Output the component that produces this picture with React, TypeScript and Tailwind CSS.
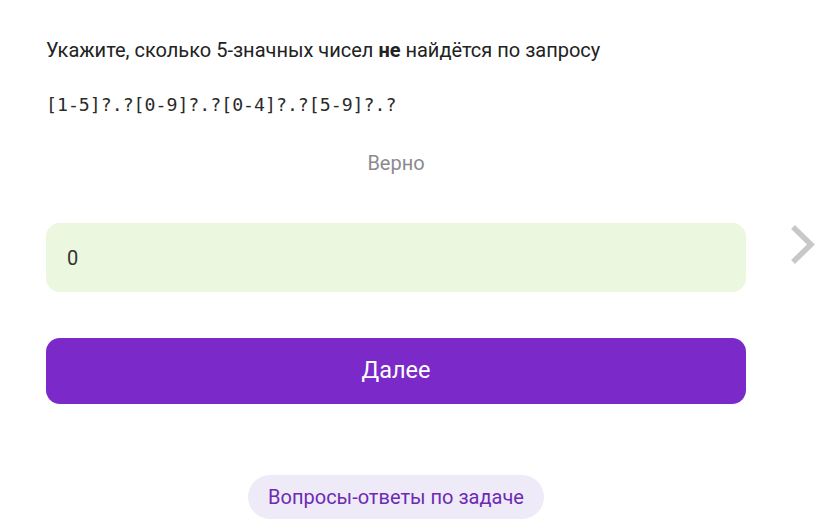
export default function App() {
  return (
    <div className="min-h-[526px] w-[835px] bg-white font-['Roboto',sans-serif] text-[#222]">
      <div className="flex">
        <div className="ml-[46px] w-[700px] pt-[36px]">
          <p className="text-[20px] leading-[28px]">
            Укажите, сколько 5-значных чисел <b className="font-bold">не</b> найдётся по запросу
          </p>
          <p className="mt-[28px] font-['DejaVu_Sans_Mono',monospace] text-[18.2px] leading-[26px] text-[#2a2a2a]">
            [1-5]?.?[0-9]?.?[0-4]?.?[5-9]?.?
          </p>
          <p className="mt-[31px] text-center text-[20px] leading-[28px] text-[#8c8a90]">Верно</p>
          <div className="mt-[46px] flex h-[69px] items-center rounded-[14px] bg-[#ebf7df] px-[21px] text-[20px] text-[#333]">
            0
          </div>
          <button className="mt-[46px] flex h-[66px] w-full items-center justify-center rounded-[14px] bg-[#7b2ac9] text-[23.5px] text-white">
            Далее
          </button>
          <div className="mt-[71px] flex justify-center">
            <span className="flex h-[44px] items-center rounded-full bg-[#efeaf8] px-[20px] text-[20px] text-[#6d2bb3]">
              Вопросы-ответы по задаче
            </span>
          </div>
        </div>
        <div className="ml-[44px] pt-[225px]">
          <svg width="28" height="40" viewBox="0 0 28 40" fill="none">
            <polyline
              points="5,4 21,19.5 5,35"
              stroke="#c8c8c8"
              strokeWidth="5.5"
              strokeLinecap="square"
              strokeLinejoin="miter"
            />
          </svg>
        </div>
      </div>
    </div>
  );
}
